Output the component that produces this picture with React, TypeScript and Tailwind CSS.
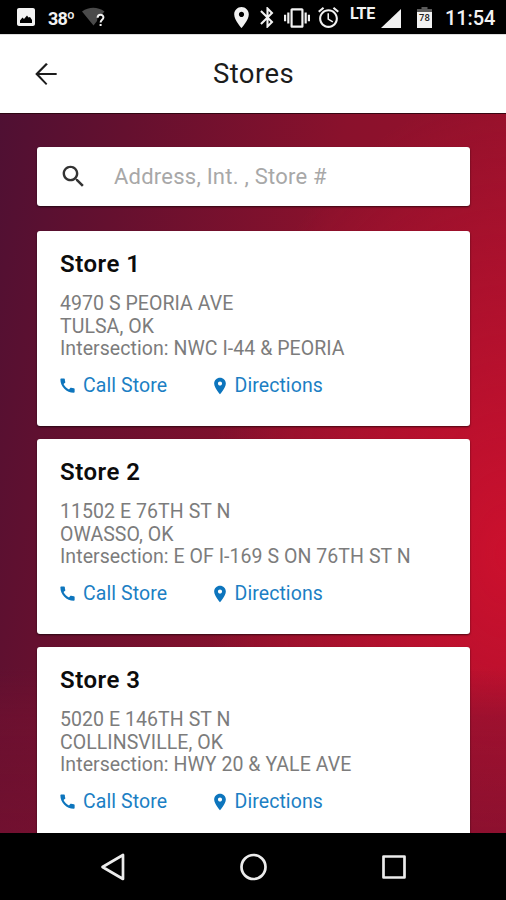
import type { ReactNode } from "react";

type Store = { name: string; lines: string[] };

const stores: Store[] = [
  { name: "Store 1", lines: ["4970 S PEORIA AVE", "TULSA, OK", "Intersection: NWC I-44 & PEORIA"] },
  { name: "Store 2", lines: ["11502 E 76TH ST N", "OWASSO, OK", "Intersection: E OF I-169 S ON 76TH ST N"] },
  { name: "Store 3", lines: ["5020 E 146TH ST N", "COLLINSVILLE, OK", "Intersection: HWY 20 & YALE AVE"] },
];

const PLACE =
  "M12 2C8.13 2 5 5.13 5 9c0 5.25 7 13 7 13s7-7.75 7-13c0-3.87-3.13-7-7-7zm0 9.5c-1.38 0-2.5-1.12-2.5-2.5s1.12-2.5 2.5-2.5 2.5 1.12 2.5 2.5-1.12 2.5-2.5 2.5z";
const PHONE =
  "M20.01 15.38c-1.23 0-2.42-.2-3.53-.56-.35-.12-.74-.03-1.01.24l-1.57 1.97c-2.83-1.35-5.48-3.9-6.89-6.83l1.95-1.66c.27-.28.35-.67.24-1.02-.37-1.11-.56-2.3-.56-3.53 0-.54-.45-.99-.99-.99H4.19C3.65 3 3 3.24 3 3.99 3 13.28 10.73 21 20.01 21c.71 0 .99-.63.99-1.18v-3.45c0-.54-.45-.99-.99-.99z";

function Icon({ className, children }: { className: string; children: ReactNode }) {
  return (
    <svg viewBox="0 0 24 24" fill="currentColor" className={`shrink-0 ${className}`}>
      {children}
    </svg>
  );
}

function StatusBar() {
  return (
    <div className="flex h-[34px] shrink-0 items-start bg-black pt-[5px] text-[#f2f2f2]">
      <Icon className="ml-[14px] size-6">
        <path d="M21 19V5c0-1.100-.9-2-2-2H5c-1.100 0-2 .9-2 2v14c0 1.100.9 2 2 2h14c1.100 0 2-.9 2-2zM6 18v-2.500l2.500-3 1.500 1.500 3-3.500 1.500 2 1.500-.5 2 3v3z" />
      </Icon>
      <span className="ml-[10px] w-[34px] text-[18px] font-bold leading-[27px] tracking-[-0.9px]">38º</span>
      <svg viewBox="0 0 24 24" className="size-6 shrink-0">
        <path d="M0 6.500C7 1.500 15.500 1.500 22.500 6.500L19.500 10H16l-1 6-3.500 4.500z" fill="#4a4a4a" />
        <path d="M15.600 12.700c.1-4 6-3.800 5.800-.2-.1 2.300-2.800 2.300-2.800 5" fill="none" stroke="#f2f2f2" strokeWidth="2" />
        <path d="M17.600 19h2v2h-2z" fill="#f2f2f2" />
      </svg>
      <Icon className="ml-[123px] size-[25px]">
        <path d={PLACE} />
      </Icon>
      <Icon className="ml-px size-[25px]">
        <path d="M17.710 7.710L12 2h-1v7.590L6.410 5 5 6.410 10.590 12 5 17.590 6.410 19 11 14.410V22h1l5.710-5.710-4.300-4.290 4.300-4.290zM13 5.830l1.880 1.880L13 9.590V5.830zm1.880 10.460L13 18.170v-3.760l1.880 1.880z" />
      </Icon>
      <Icon className="ml-[4px] size-[26px]">
        <path d="M0 15h2V9H0v6zm3 2h2V7H3v10zm19-8v6h2V9h-2zm-3 8h2V7h-2v10zM16.500 3h-9C6.670 3 6 3.670 6 4.500v15c0 .83.67 1.500 1.500 1.500h9c.83 0 1.500-.67 1.500-1.500v-15c0-.83-.67-1.500-1.500-1.500zM16 19H8V5h8v14z" />
      </Icon>
      <Icon className="ml-[6px] size-[25px]">
        <path d="M22 5.720l-4.600-3.860-1.290 1.530 4.600 3.860L22 5.720zM7.880 3.390L6.600 1.860 2 5.710l1.290 1.530 4.590-3.850zM12.500 8H11v6l4.750 2.850.75-1.230-4-2.370V8zM12 4c-4.970 0-9 4.030-9 9s4.020 9 9 9c4.970 0 9-4.030 9-9s-4.030-9-9-9zm0 16c-3.870 0-7-3.130-7-7s3.130-7 7-7 7 3.130 7 7-3.130 7-7 7z" />
      </Icon>
      <span className="ml-[9px] w-[28px] text-[16px] font-bold leading-[17px] tracking-[-0.3px]">LTE</span>
      <Icon className="ml-[2px] size-6">
        <path d="M1 23L21 4v19z" />
      </Icon>
      <svg viewBox="0 0 15 22" className="ml-[13px] mt-[2px] h-[22px] w-[15px] shrink-0">
        <path d="M4.500 0h6v2H15v3H0V2h4.500z" fill="#5a5a5a" />
        <path d="M0 5h15v16H0z" fill="#f2f2f2" />
        <text x="7.500" y="14" textAnchor="middle" fontSize="9.500" fontWeight="500" fill="#222">78</text>
      </svg>
      <span className="ml-[13px] text-[20px] font-medium leading-[27px] tracking-[-0.1px]">11:54</span>
    </div>
  );
}

function StoreCard({ store }: { store: Store }) {
  return (
    <article className="h-[195px] shrink-0 rounded-[3px] bg-white pl-[23px] pt-[19px] shadow-[0_1px_2px_rgba(0,0,0,0.6)]">
      <h2 className="text-[24px] font-semibold leading-[28px] tracking-[0.5px] text-[#0c0c0c]">{store.name}</h2>
      <div className="mt-[15px] text-[19.500px] font-normal leading-[22.600px] tracking-[0.06px] text-[#7c7c7c]">
        {store.lines.map((line) => (
          <p key={line} className="whitespace-nowrap">{line}</p>
        ))}
      </div>
      <div className="mt-[13px] flex h-[24px] items-center text-[19.500px] leading-[24px] tracking-[0.08px] text-[#1c7fc4]">
        <a className="flex w-[150px] items-center">
          <Icon className="-ml-[2px] size-[19px] text-[#0d75bd]">
            <path d={PHONE} />
          </Icon>
          <span className="ml-[6px]">Call Store</span>
        </a>
        <a className="flex items-center">
          <Icon className="-mr-[1px] size-[20px] text-[#0d75bd]">
            <path d={PLACE} />
          </Icon>
          <span className="ml-[5.500px]">Directions</span>
        </a>
      </div>
    </article>
  );
}

export default function App() {
  return (
    <div className="flex h-[900px] w-[506px] flex-col overflow-hidden bg-black font-['Roboto',sans-serif]">
      <StatusBar />
      <header className="grid h-[79px] shrink-0 grid-cols-[93px_1fr_93px] items-center border-t border-[#ddd] bg-white text-[#1c1c1c]">
        <Icon className="ml-[30px] size-8">
          <path d="M20 11.250H6.900l6.500-6.500L12 3.800 3.900 12l8.100 8.200 1-.95-6.100-6.500H20z" />
        </Icon>
        <h1 className="pl-px text-center text-[27.500px] leading-[32px] tracking-[0.400px]">Stores</h1>
      </header>
      <main className="flex h-[720px] shrink-0 flex-col overflow-hidden border-t border-black/60 bg-[linear-gradient(180deg,#78103000_77%,#78103070_84%,#781030a0_100%),radial-gradient(ellipse_300px_460px_at_506px_440px,#cb102d_0%,#c8102ecc_25%,#c8102e00_100%),linear-gradient(100deg,#4f1033_0%,#64102f_20%,#8a112c_55%,#a0112c_100%)] pl-[37px] pr-[36px] pt-[33px]">
        <div className="flex h-[59px] shrink-0 items-center rounded-[3px] bg-white pl-[22px] shadow-[0_1px_2px_rgba(0,0,0,0.6)]">
          <Icon className="size-[29px] text-[#333]">
            <path d="M15.500 14h-.79l-.28-.27C15.410 12.590 16 11.110 16 9.500 16 5.910 13.090 3 9.500 3S3 5.910 3 9.500 5.910 16 9.500 16c1.610 0 3.090-.59 4.230-1.570l.27.28v.79l5 4.990L20.490 19l-4.990-5zm-6 0C7.010 14 5 11.990 5 9.500S7.010 5 9.500 5 14 7.010 14 9.500 11.990 14 9.500 14z" />
          </Icon>
          <span className="ml-[26px] text-[22px] font-normal leading-[32px] tracking-[0.230px] text-[#a8a8a8]">Address, Int. , Store #</span>
        </div>
        <div className="mt-[25px] flex flex-col gap-[13px]">
          {stores.map((store) => (
            <StoreCard key={store.name} store={store} />
          ))}
        </div>
      </main>
      <nav className="flex h-[67px] shrink-0 items-center bg-black text-[#ececec]">
        <svg viewBox="0 0 30 30" className="ml-[98px] size-[30px]" fill="none" stroke="currentColor" strokeWidth="2.700" strokeLinejoin="round">
          <path d="M25 3v24L4.500 15z" />
        </svg>
        <svg viewBox="0 0 30 30" className="ml-[111px] size-[30px]" fill="none" stroke="currentColor" strokeWidth="2.700">
          <circle cx="14.500" cy="15" r="12" />
        </svg>
        <svg viewBox="0 0 30 30" className="ml-[110px] size-[30px]" fill="none" stroke="currentColor" strokeWidth="2.700" strokeLinejoin="round">
          <path d="M4.500 4.500h21v21h-21z" />
        </svg>
      </nav>
    </div>
  );
}
